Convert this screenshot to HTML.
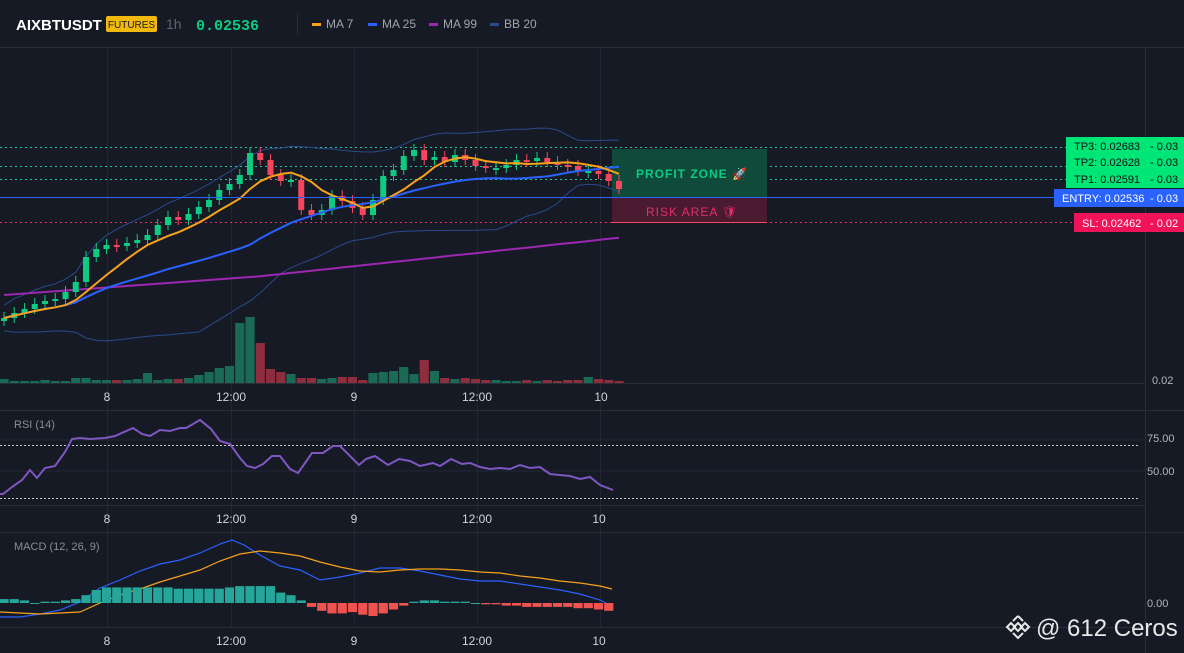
<!DOCTYPE html>
<html><head><meta charset="utf-8"><style>
html,body{margin:0;padding:0;background:#161a25;width:1184px;height:653px;overflow:hidden;font-family:"Liberation Sans",sans-serif}
svg{position:absolute;left:0;top:0}
</style></head><body>
<svg id="s" width="1184" height="653" xmlns="http://www.w3.org/2000/svg" font-family="Liberation Sans, sans-serif">
<rect width="1184" height="653" fill="#161a25"/>
<line x1="0" y1="47.5" x2="1184" y2="47.5" stroke="#2a2e39"/>
<text x="16" y="30" fill="#fff" font-weight="bold" font-size="15">AIXBTUSDT</text>
<rect x="106" y="16" width="51" height="16" rx="2" fill="#f0b90b"/>
<text x="131.5" y="28" fill="#161a25" font-size="10" text-anchor="middle">FUTURES</text>
<text x="166" y="29" fill="#5d6370" font-size="14">1h</text>
<text x="196" y="30" fill="#0ecb81" font-weight="bold" font-size="15" font-family="Liberation Mono, monospace">0.02536</text>
<line x1="297.5" y1="14" x2="297.5" y2="34" stroke="#2a2e39"/>
<rect x="312" y="23" width="9" height="3" fill="#f7a21b"/><text x="326" y="28" fill="#a0a4ad" font-size="12">MA 7</text>
<rect x="368" y="23" width="9" height="3" fill="#2962ff"/><text x="382" y="28" fill="#a0a4ad" font-size="12">MA 25</text>
<rect x="429" y="23" width="9" height="3" fill="#9c27b0"/><text x="443" y="28" fill="#a0a4ad" font-size="12">MA 99</text>
<rect x="490" y="23" width="9" height="3" fill="#2a4a8a"/><text x="504" y="28" fill="#a0a4ad" font-size="12">BB 20</text>
<g stroke="#222632">
<line x1="107.5" y1="48" x2="107.5" y2="627"/><line x1="231.5" y1="48" x2="231.5" y2="627"/><line x1="354.5" y1="48" x2="354.5" y2="627"/><line x1="477.5" y1="48" x2="477.5" y2="627"/><line x1="600.5" y1="48" x2="600.5" y2="627"/>
<line x1="0" y1="440" x2="1145" y2="440"/><line x1="0" y1="471" x2="1145" y2="471"/>
</g>
<g stroke="#2a2e39"><line x1="0" y1="410.5" x2="1184" y2="410.5"/><line x1="0" y1="505.5" x2="1145" y2="505.5"/><line x1="0" y1="532.5" x2="1184" y2="532.5"/><line x1="0" y1="627.5" x2="1145" y2="627.5"/><line x1="0" y1="383.5" x2="1145" y2="383.5"/>
<line x1="1145.5" y1="48" x2="1145.5" y2="653"/></g>
<g fill="#d1d4dc" font-size="12" text-anchor="middle">
<text x="107" y="401">8</text><text x="231" y="401">12:00</text><text x="354" y="401">9</text><text x="477" y="401">12:00</text><text x="601" y="401">10</text>
<text x="107" y="523">8</text><text x="231" y="523">12:00</text><text x="354" y="523">9</text><text x="477" y="523">12:00</text><text x="599" y="523">10</text>
<text x="107" y="645">8</text><text x="231" y="645">12:00</text><text x="354" y="645">9</text><text x="477" y="645">12:00</text><text x="599" y="645">10</text>
</g>
<g fill="#b2b5be" font-size="11"><text x="1152" y="384">0.02</text><text x="1147" y="442">75.00</text><text x="1147" y="475">50.00</text><text x="1147" y="607">0.00</text></g>
<text x="14" y="428" fill="#8a8e99" font-size="11">RSI (14)</text>
<text x="14" y="550" fill="#8a8e99" font-size="11">MACD (12, 26, 9)</text>
<g stroke-dasharray="2,2" stroke="#c8c8c8" stroke-width="1"><line x1="0" y1="445.5" x2="1138" y2="445.5"/><line x1="0" y1="498.5" x2="1138" y2="498.5"/></g>
<g stroke-dasharray="2,3"><line x1="0" y1="147.5" x2="1068" y2="147.5" stroke="#1ec7a0"/><line x1="0" y1="166.5" x2="1068" y2="166.5" stroke="#1ec7a0"/><line x1="0" y1="179.5" x2="1068" y2="179.5" stroke="#1ec7a0"/><line x1="0" y1="222.5" x2="1075" y2="222.5" stroke="#e0306a"/></g>
<rect x="612" y="149" width="155" height="48" fill="#0f4a3a"/>
<rect x="612" y="197" width="155" height="26" fill="#4a1a30"/>
<line x1="612" y1="222.5" x2="767" y2="222.5" stroke="#f6465d"/>
<text x="636" y="178" fill="#0ecb81" font-size="12" font-weight="bold" letter-spacing="1">PROFIT ZONE 🚀</text>
<text x="646" y="216" fill="#e0306a" font-size="12" letter-spacing="1">RISK AREA 🛡</text>
<g id="dyn"></g>
<rect x="0" y="197" width="1184" height="1" fill="#2962ff"/>
<g font-size="11">
<rect x="1066" y="137" width="80" height="18" fill="#00e676"/><rect x="1146" y="137" width="38" height="18" fill="#00e676"/>
<text x="1074" y="150" fill="#111">TP3: 0.02683</text><text x="1150" y="150" fill="#111">- 0.03</text>
<rect x="1066" y="153" width="80" height="17" fill="#00e676"/><rect x="1146" y="153" width="38" height="17" fill="#00e676"/>
<text x="1074" y="166" fill="#111">TP2: 0.02628</text><text x="1150" y="166" fill="#111">- 0.03</text>
<rect x="1066" y="170" width="80" height="18" fill="#00e676"/><rect x="1146" y="170" width="38" height="18" fill="#00e676"/>
<text x="1074" y="183" fill="#111">TP1: 0.02591</text><text x="1150" y="183" fill="#111">- 0.03</text>
<rect x="1054" y="189" width="92" height="18" fill="#2962ff"/><rect x="1146" y="189" width="38" height="18" fill="#2962ff"/>
<text x="1062" y="202" fill="#fff">ENTRY: 0.02536</text><text x="1150" y="202" fill="#fff">- 0.03</text>
<rect x="1074" y="213" width="72" height="19" fill="#f0135a"/><rect x="1146" y="213" width="38" height="19" fill="#f0135a"/>
<text x="1082" y="227" fill="#fff">SL: 0.02462</text><text x="1150" y="227" fill="#fff">- 0.02</text>
</g>
<text x="1036" y="636" fill="#e8e8e8" font-size="24">@ 612 Ceros</text>
<g transform="translate(1018,627)" fill="none" stroke="#e8e8e8" stroke-width="2"><path d="M0 -11 L5 -6 M-5 -6 L0 -11 M-11 0 L-7 -4 L-3 0 L-7 4Z M11 0 L7 -4 L3 0 L7 4Z M0 -4 L4 0 L0 4 L-4 0Z M-5 6 L0 11 L5 6"/></g>
</svg>
<script>
var c=[318,313,309,304,301,299,292,282,257,249,245,246,243,240,235,225,217,220,214,207,200,190,184,175,153,160,175,181,180,210,215,210,196,201,208,215,200,176,170,156,150,160,157,162,155,160,166,168,168,165,160,161,158,162,165,166,171,171,174,181,189];
var N=c.length,sp=10.25,h='';
function X(i){return 4+i*sp}
function ma(n){var p=[];for(var i=0;i<N;i++){var s=0,k=0;for(var j=Math.max(0,i-n+1);j<=i;j++){s+=c[j];k++}p.push(X(i).toFixed(1)+','+(s/k).toFixed(1))}return p.join(' ')}
function bb(d){var p=[];for(var i=0;i<N;i++){var s=0,k=0;for(var j=Math.max(0,i-19);j<=i;j++){s+=c[j];k++}var m=s/k,v=0;for(j=Math.max(0,i-19);j<=i;j++)v+=(c[j]-m)*(c[j]-m);var sd=Math.sqrt(v/k)+8;p.push(X(i).toFixed(1)+','+(m+d*sd*1.6).toFixed(1))}return p.join(' ')}
h+='<polyline points="'+bb(-1)+'" fill="none" stroke="#2a4a8a"/><polyline points="'+bb(1)+'" fill="none" stroke="#2a4a8a"/>';
var m99=[];for(var i=0;i<N;i++)m99.push(X(i).toFixed(1)+','+(295-i*0.75-(i>25?(i-25)*0.35:0)).toFixed(1));
h+='<polyline points="'+m99.join(' ')+'" fill="none" stroke="#9c27b0" stroke-width="2"/>';
for(i=0;i<N;i++){var o=i?c[i-1]:c[0]+3,cl=c[i],up=cl<=o,col=up?'#0ecb81':'#f6465d',t=Math.min(o,cl),b=Math.max(o,cl);if(b-t<2)b=t+2;
h+='<line x1="'+X(i)+'" y1="'+(t-6)+'" x2="'+X(i)+'" y2="'+(b+5)+'" stroke="'+col+'"/><rect x="'+(X(i)-3)+'" y="'+t+'" width="6" height="'+(b-t)+'" fill="'+col+'"/>';
var vh=[4,2,2,2,3,2,2,5,5,3,3,3,3,4,10,3,4,4,5,8,11,15,17,60,66,40,14,11,9,5,5,4,5,6,6,3,10,11,12,16,9,23,12,5,4,5,4,3,3,2,2,3,2,3,2,3,3,6,4,3,2][i]||2;
h+='<rect x="'+(X(i)-4.6)+'" y="'+(383-vh)+'" width="9.2" height="'+vh+'" fill="'+(up?'#1a6b56':'#8e2d3e')+'"/>';}
h+='<polyline points="'+ma(25)+'" fill="none" stroke="#2962ff" stroke-width="2"/><polyline points="'+ma(7)+'" fill="none" stroke="#f7a21b" stroke-width="2"/>';
h+='<polyline points="0,494 3,494 12,487 22,480 30,470 37,478 45,468 55,466 65,452 72,439 80,438 90,439 105,438 115,436 133,428 142,434 150,436 160,430 170,431 180,428 186,428 200,420 211,429 220,441 230,444 240,458 247,466 255,468 263,464 272,456 280,456 290,469 298,473 312,453 323,453 333,446 340,446 350,456 359,465 366,459 375,456 388,465 399,459 410,461 420,466 433,463 440,466 451,459 462,464 470,463 480,467 490,469 500,468 510,469 520,465 530,468 540,467 550,474 560,475 570,476 580,479 590,477 600,485 613,490" fill="none" stroke="#7e57c2" stroke-width="2"/>';
h+='<polyline points="0,617 20,617 40,614 60,610 80,602 100,588 120,580 140,571 160,564 180,560 200,553 220,544 232,540 244,545 260,555 280,566 300,570 320,580 340,577 360,573 380,568 400,568 420,571 440,575 460,579 480,581 500,581 520,584 540,587 560,590 580,594 600,600 612,606" fill="none" stroke="#2962ff" stroke-width="1.2"/>';
h+='<polyline points="0,612 40,614 80,612 100,603 120,595 140,589 160,582 180,576 200,570 220,561 240,554 260,551 280,553 300,556 320,562 340,567 360,571 380,572 400,570 420,569 440,569 460,570 480,572 500,573 520,576 540,578 560,581 580,583 600,586 612,589" fill="none" stroke="#f7a21b" stroke-width="1.2"/>';
var hv=[3,3,2,0,1,1,2,3,6,10,12,12,12,12,12,12,12,11,11,11,11,11,12,13,13,13,13,8,6,2,-3,-6,-8,-8,-7,-9,-10,-8,-5,-2,1,2,2,1,1,1,0,-1,-1,-2,-2,-3,-3,-3,-3,-3,-4,-4,-5,-6];
for(i=0;i<hv.length;i++){var v=hv[i]*1.3,y=v>=0?603-v:603,hh=Math.max(Math.abs(v),1);h+='<rect x="'+(X(i)-4.6)+'" y="'+y+'" width="9.2" height="'+hh+'" fill="'+(v>=0?'#26a69a':'#ef5350')+'"/>';}
document.getElementById('dyn').innerHTML=h;
</script>
</body></html>
